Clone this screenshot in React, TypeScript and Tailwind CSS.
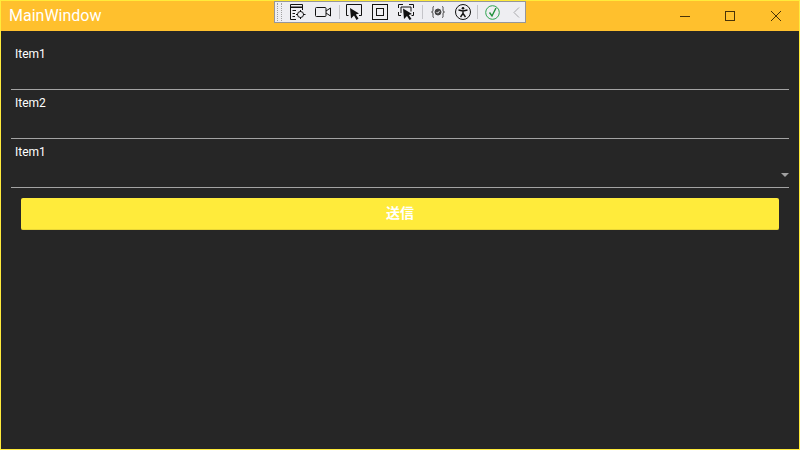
const Field = ({ label, select }: { label: string; select?: boolean }) => (
  <div className="relative h-[49px] mx-[10px] border-b border-[#a3a3a3] pl-1 pt-[5px]">
    <div className="text-[12px] leading-[16px] text-white">{label}</div>
    {select && (
      <div className="absolute right-0 top-[34px] w-0 h-0 border-x-[4px] border-x-transparent border-t-[4px] border-t-[#a0a0a0]" />
    )}
  </div>
);

const Sep = ({ className }: { className: string }) => <div className={`w-px h-[14px] bg-[#c4c4c8] ${className}`} />;

const Toolbar = () => (
  <div className="absolute left-[273px] top-0 w-[252px] h-[22px] bg-[#eeeef2] border border-[#96969a] flex items-center text-[#111]">
    <div className="w-[5px] h-[18px] ml-[2px] border-x border-dotted border-[#a0a0a0]" />
    <svg className="ml-[8px]" width="16" height="16" viewBox="0 0 16 16" fill="none" stroke="currentColor">
      <path d="M0.5 15.5V0.5H12.5V6M0.5 3H12.5M0.5 3.5H12.5M6 15.5H0.5M2.5 6.5H6M2.5 9.5H5M2.5 12.5H5" />
      <circle cx="10.5" cy="10.5" r="3" />
      <path d="M10.5 6V8M10.5 13V15M6 10.5H8M13 10.5H15.5" />
    </svg>
    <svg className="ml-[9px]" width="16" height="10" viewBox="0 0 16 10" fill="none" stroke="currentColor">
      <rect x="0.5" y="0.5" width="10.5" height="9" rx="1" />
      <path d="M11 4L15.5 1V9L11 6" />
    </svg>
    <Sep className="ml-[8px]" />
    <svg className="ml-[6px]" width="16" height="16" viewBox="0 0 16 16" fill="none" stroke="currentColor">
      <path d="M2.5 11.5H0.5V0.5H15.5V11.5H13" />
      <path d="M4 4L13 9.5L9.8 10.5L12.5 14.5L10.5 16L8 11.5L5 14.5Z" fill="currentColor" stroke="none" />
    </svg>
    <svg className="ml-[10px]" width="16" height="16" viewBox="0 0 16 16" fill="none" stroke="currentColor">
      <rect x="0.5" y="0.5" width="15" height="15" />
      <rect x="4.5" y="4.5" width="7" height="7" />
    </svg>
    <svg className="ml-[10px]" width="16" height="16" viewBox="0 0 16 16" fill="none" stroke="currentColor">
      <path d="M0.5 4V0.5H5M11 0.5H15.5V4M0.5 8V11.5H3M15.5 8V11.5H13.5M3 3H13V7.5M3 3V9" />
      <path d="M5 4.5L14 10L10.8 11L13.5 15L11.5 16L9 12L6 15Z" fill="currentColor" stroke="none" />
    </svg>
    <Sep className="ml-[8px]" />
    <svg className="ml-[8px]" width="14" height="14" viewBox="0 0 14 14" fill="none" stroke="#444">
      <path d="M3 1.5C1.5 1.5 2 3 2 5S1 7 0.5 7C1 7 2 7 2 9S1.5 12.5 3 12.5M11 1.5C12.5 1.5 12 3 12 5S13 7 13.5 7C13 7 12 7 12 9S12.5 12.5 11 12.5" />
      <circle cx="7" cy="7" r="3" fill="#444" />
      <path d="M5.5 7L6.7 8.2L8.7 5.8" stroke="#eeeef2" />
    </svg>
    <svg className="ml-[10px]" width="16" height="16" viewBox="0 0 16 16" fill="none" stroke="currentColor">
      <circle cx="8" cy="8" r="7.5" />
      <circle cx="8" cy="4.2" r="1.3" fill="currentColor" stroke="none" />
      <path d="M3.5 6L8 7L12.5 6M8 7V9.5L5.5 13M8 9.5L10.5 13" strokeWidth="1.4" />
    </svg>
    <Sep className="ml-[6px]" />
    <svg className="ml-[7px]" width="15" height="15" viewBox="0 0 15 15" fill="none" stroke="#2ea44f">
      <circle cx="7.5" cy="7.5" r="6.8" />
      <path d="M4.5 7.5L7 11L11 3" strokeWidth="1.4" stroke="#1f8f3a" />
    </svg>
    <svg className="ml-[13px]" width="7" height="11" viewBox="0 0 7 11" fill="none" stroke="#a8a8ac">
      <path d="M6 0.5L1 5.5L6 10.5" />
    </svg>
  </div>
);

export default function App() {
  return (
    <div
      className="relative w-[800px] h-[450px] bg-[#262626] border border-[#ffeb3b] flex flex-col overflow-hidden"
      style={{ fontFamily: 'Roboto, "Noto Sans CJK JP", sans-serif' }}
    >
      <div className="h-[30px] shrink-0 bg-[#ffc02d] flex items-center justify-between">
        <span className="ml-2 text-[16px] leading-[20px] text-white">MainWindow</span>
        <div className="flex items-center text-[#4a3408]">
          <div className="w-[45px] h-[30px] flex items-center justify-center">
            <div className="w-[10px] h-px bg-[#4a3408]" />
          </div>
          <div className="w-[46px] h-[30px] flex items-center justify-center">
            <div className="w-[10px] h-[10px] border border-[#4a3408]" />
          </div>
          <div className="w-[46px] h-[30px] flex items-center justify-center">
            <svg width="10" height="10" viewBox="0 0 10 10" stroke="currentColor" fill="none">
              <path d="M0 0L10 10M10 0L0 10" />
            </svg>
          </div>
        </div>
      </div>
      <Toolbar />
      <div className="pt-[10px]">
        <Field label="Item1" />
        <Field label="Item2" />
        <Field label="Item1" select />
        <button className="block mt-[10px] mx-[20px] w-[758px] h-[32px] bg-[#ffeb3b] border-b border-[#e8d536] rounded-[2px] text-white text-[14px] font-bold">
          送信
        </button>
      </div>
    </div>
  );
}
